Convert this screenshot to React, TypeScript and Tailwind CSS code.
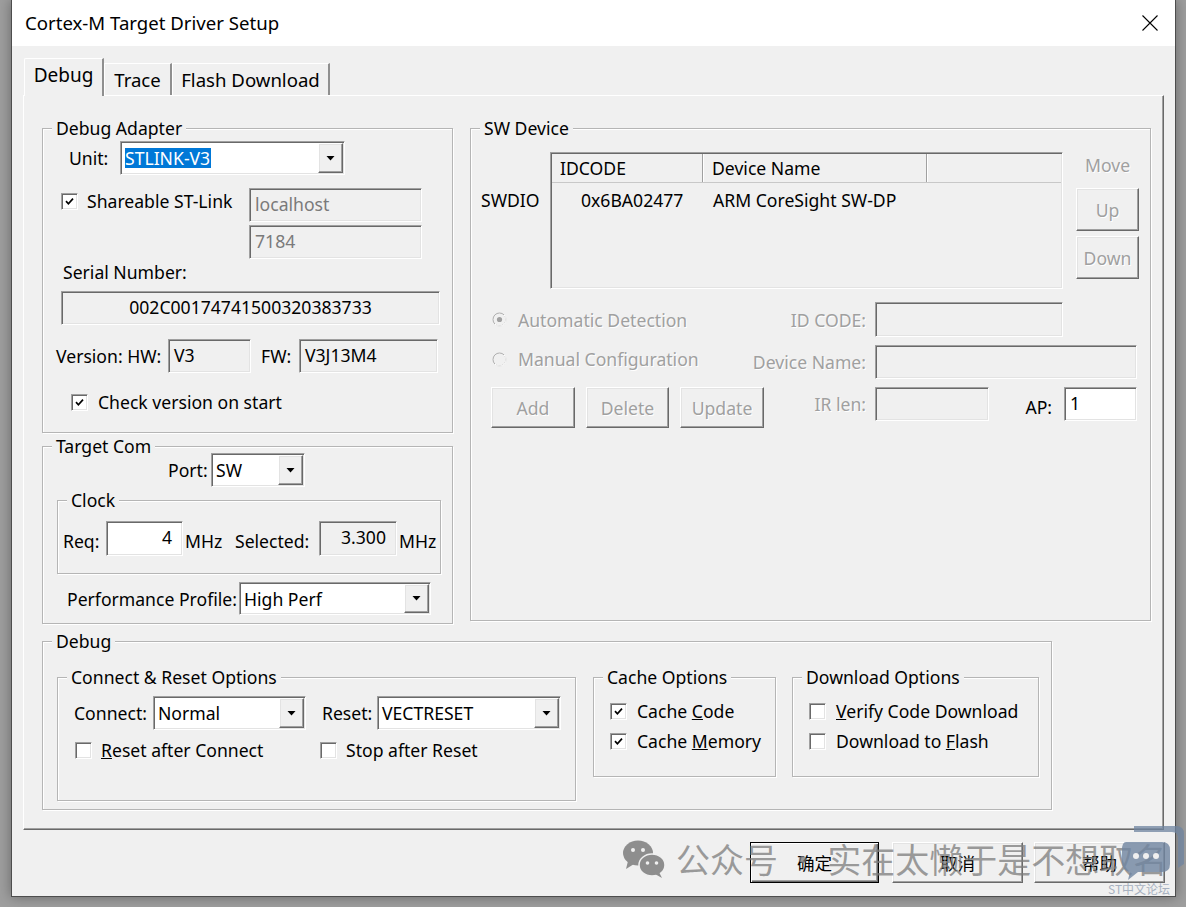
import React from "react";

const sunken =
  "border border-t-[#a0a0a0] border-l-[#a0a0a0] border-b-white border-r-white shadow-[inset_1px_1px_0_#696969,inset_-1px_-1px_0_#e3e3e3]";
const raised =
  "border border-t-white border-l-white border-b-[#696969] border-r-[#696969] shadow-[inset_-1px_-1px_0_#a0a0a0,inset_1px_1px_0_#e3e3e3]";
const gray = "text-[#a0a0a0] [text-shadow:1px_1px_0_#ffffff]";

function Group({
  title,
  className = "",
  children,
}: {
  title: string;
  className?: string;
  children?: React.ReactNode;
}) {
  return (
    <div
      className={`relative border border-[#b5b5b5] shadow-[1px_1px_0_#fff,inset_1px_1px_0_#fff] ${className}`}
    >
      <span className="absolute -top-[11px] left-[9px] px-[4px] bg-[#f0f0f0] leading-[20px] whitespace-nowrap">
        {title}
      </span>
      {children}
    </div>
  );
}

function Check({ checked = false }: { checked?: boolean }) {
  return (
    <span
      className={`${sunken} w-[17px] h-[17px] bg-white flex items-center justify-center shrink-0`}
    >
      {checked && (
        <svg width="9" height="9" viewBox="0 0 9 9">
          <path d="M1 4.2 L3.4 6.8 L8 1.6" stroke="#000" strokeWidth="1.7" fill="none" />
        </svg>
      )}
    </span>
  );
}

function Radio({ on = false }: { on?: boolean }) {
  return (
    <svg width="15" height="15" viewBox="0 0 15 15" className="shrink-0">
      <circle cx="7.5" cy="7.5" r="6.5" fill="#f0f0f0" stroke="#b0b0b0" />
      <path d="M3 12.2 A6.5 6.5 0 0 0 12.2 3" stroke="#ffffff" fill="none" />
      {on && <circle cx="7.5" cy="7.5" r="2.6" fill="#a0a0a0" />}
    </svg>
  );
}

function Combo({
  value,
  className = "",
  selected = false,
}: {
  value: string;
  className?: string;
  selected?: boolean;
}) {
  return (
    <div className={`${sunken} bg-white flex p-[1px] shrink-0 ${className}`}>
      <div className="flex-1 flex items-center pl-[3px] overflow-hidden whitespace-nowrap">
        <span className={selected ? "bg-[#0078d7] text-white pr-[1px]" : ""}>{value}</span>
      </div>
      <div className={`${raised} w-[25px] bg-[#f0f0f0] flex items-center justify-center`}>
        <svg width="9" height="5" viewBox="0 0 9 5">
          <path d="M0.5 0 H8.5 L4.5 4.5 Z" fill="#000" />
        </svg>
      </div>
    </div>
  );
}

function Field({
  value = "",
  className = "",
  white = false,
  dim = false,
  align = "left",
}: {
  value?: string;
  className?: string;
  white?: boolean;
  dim?: boolean;
  align?: "left" | "right" | "center";
}) {
  const a =
    align === "right" ? "justify-end pr-[10px]" : align === "center" ? "justify-center" : "justify-start pl-[5px]";
  return (
    <div
      className={`${sunken} ${white ? "bg-white" : "bg-[#f0f0f0]"} ${
        dim ? "text-[#7a7a7a]" : "text-black"
      } flex items-center pb-[3px] whitespace-nowrap shrink-0 ${a} ${className}`}
    >
      {value}
    </div>
  );
}

function Btn({
  label,
  className = "",
  disabled = false,
  main = false,
}: {
  label: string;
  className?: string;
  disabled?: boolean;
  main?: boolean;
}) {
  return (
    <div
      className={`${
        main
          ? "border border-black shadow-[inset_1px_1px_0_#fff,inset_-1px_-1px_0_#696969,inset_-2px_-2px_0_#a0a0a0]"
          : raised
      } bg-[#f0f0f0] flex items-center justify-center shrink-0 ${disabled ? gray : "text-black"} ${className}`}
    >
      {label}
    </div>
  );
}

function ListView() {
  return (
    <div className={`${sunken} w-[513px] h-[137px] bg-[#f0f0f0] flex flex-col p-[1px] shrink-0`}>
      <div className="flex h-[29px] border-b border-[#c8c8c8]">
        <div className="w-[151px] flex items-center pl-[8px] border-r border-[#a0a0a0] shadow-[1px_0_0_#fff]">
          IDCODE
        </div>
        <div className="w-[224px] flex items-center pl-[9px] border-r border-[#a0a0a0] shadow-[1px_0_0_#fff]">
          Device Name
        </div>
        <div className="flex-1" />
      </div>
      <div className="flex mt-[7px] leading-[20px]">
        <span className="w-[152px] pl-[29px]">0x6BA02477</span>
        <span className="pl-[9px]">ARM CoreSight SW-DP</span>
      </div>
    </div>
  );
}

function WeChat() {
  return (
    <svg width="44" height="40" viewBox="0 0 44 40">
      <ellipse cx="16" cy="14" rx="15" ry="12.5" fill="#8e8e8e" />
      <path d="M6 22 L4 30 L12 25 Z" fill="#8e8e8e" />
      <circle cx="11" cy="11" r="2" fill="#f0f0f0" />
      <circle cx="21" cy="11" r="2" fill="#f0f0f0" />
      <ellipse cx="30" cy="26" rx="13" ry="11" fill="#8e8e8e" stroke="#f0f0f0" strokeWidth="1.5" />
      <path d="M37 33 L40 39 L33 35 Z" fill="#8e8e8e" />
      <circle cx="25.5" cy="24" r="1.8" fill="#f0f0f0" />
      <circle cx="34.5" cy="24" r="1.8" fill="#f0f0f0" />
    </svg>
  );
}

export default function App() {
  return (
    <div className="relative w-[1186px] h-[907px] overflow-hidden bg-[#9e9e9e] font-['Noto_Sans','Noto_Sans_CJK_SC',sans-serif] text-[17.6px] leading-[20px] text-black">
      <div className="ml-[11px] w-[1165px] h-[897px] bg-[#f0f0f0] border-l border-r border-b border-[#4d4d4d] flex flex-col shadow-[0_0_12px_rgba(0,0,0,0.35)]">
        {/* title bar */}
        <div className="h-[46px] bg-white flex items-center justify-between pl-[13px] pr-[17px] shrink-0">
          <span className="text-[18.6px]">Cortex-M Target Driver Setup</span>
          <svg width="16" height="16" viewBox="0 0 16 16">
            <path d="M0.5 0.5 L15.5 15.5 M15.5 0.5 L0.5 15.5" stroke="#000" strokeWidth="1.1" />
          </svg>
        </div>

        {/* tabs */}
        <div className="flex items-end h-[37px] mt-[12px] pl-[12px] shrink-0">
          <div className="relative z-10 -mb-px h-[38px] w-[80px] bg-[#f0f0f0] border-t border-l border-white border-r-2 border-r-[#8f8f8f] rounded-tl-[2px] flex items-start justify-center pt-[6px] text-[19px]">
            Debug
          </div>
          <div className="h-[32px] w-[68px] border-t border-l border-white border-r-2 border-r-[#8f8f8f] flex items-center justify-center text-[18.6px]">
            Trace
          </div>
          <div className="h-[32px] w-[158px] border-t border-l border-white border-r-2 border-r-[#8f8f8f] flex items-center justify-center text-[18.6px]">
            Flash Download
          </div>
        </div>

        {/* tab panel */}
        <div className="ml-[11px] w-[1141px] h-[735px] border-t border-l border-white border-r border-b border-r-[#696969] border-b-[#696969] shadow-[inset_-1px_-1px_0_#a0a0a0] pt-[32px] pl-[18px] shrink-0">
          <div className="flex">
            <div className="flex flex-col w-[411px]">
              <Group title="Debug Adapter" className="h-[305px] flex flex-col">
                <div className="flex items-center mt-[12px] h-[34px]">
                  <span className="ml-[26px] w-[51px]">Unit:</span>
                  <Combo value="STLINK-V3" selected className="w-[225px] h-[34px]" />
                </div>
                <div className="flex mt-[13px]">
                  <div className="w-[206px] flex items-center h-[26px] pl-[18px] gap-[9px]">
                    <Check checked />
                    <span className="whitespace-nowrap">Shareable ST-Link</span>
                  </div>
                  <div className="flex flex-col gap-[3px]">
                    <Field value="localhost" dim className="w-[173px] h-[34px]" />
                    <Field value="7184" dim className="w-[173px] h-[34px]" />
                  </div>
                </div>
                <span className="mt-[3px] ml-[20px]">Serial Number:</span>
                <Field
                  value="002C00174741500320383733"
                  align="center"
                  className="mt-[9px] ml-[18px] w-[379px] h-[34px]"
                />
                <div className="flex items-center mt-[14px] h-[34px]">
                  <span className="ml-[13px] w-[112px] whitespace-nowrap">Version: HW:</span>
                  <Field value="V3" className="w-[83px] h-[34px]" />
                  <span className="ml-[10px] w-[38px]">FW:</span>
                  <Field value="V3J13M4" className="w-[139px] h-[34px]" />
                </div>
                <div className="flex items-center mt-[19px] h-[20px] ml-[28px] gap-[10px]">
                  <Check checked />
                  <span>Check version on start</span>
                </div>
              </Group>

              <Group title="Target Com" className="mt-[13px] h-[178px] flex flex-col">
                <div className="flex items-center mt-[6px] h-[34px]">
                  <span className="ml-[125px] w-[43px]">Port:</span>
                  <Combo value="SW" className="w-[94px] h-[34px]" />
                </div>
                <Group title="Clock" className="ml-[14px] mt-[13px] w-[384px] h-[74px]">
                  <div className="flex items-center mt-[20px] h-[35px] whitespace-nowrap">
                    <span className="ml-[5px] w-[43px] pt-[5px]">Req:</span>
                    <Field value="4" white align="right" className="w-[77px] h-[35px]" />
                    <span className="ml-[2px] w-[50px] pt-[5px]">MHz</span>
                    <span className="w-[84px] pt-[5px]">Selected:</span>
                    <Field value="3.300" align="right" className="w-[78px] h-[35px]" />
                    <span className="ml-[2px] pt-[5px]">MHz</span>
                  </div>
                </Group>
                <div className="flex items-center mt-[8px] h-[33px]">
                  <span className="ml-[24px] w-[172px] whitespace-nowrap">Performance Profile:</span>
                  <Combo value="High Perf" className="w-[192px] h-[33px]" />
                </div>
              </Group>
            </div>

            <Group title="SW Device" className="ml-[17px] w-[681px] h-[493px] flex flex-col">
              <div className="flex mt-[23px]">
                <span className="w-[79px] pl-[10px] mt-[38px] h-[20px] shrink-0">SWDIO</span>
                <ListView />
                <div className="ml-[13px] flex flex-col w-[63px]">
                  <span className={`${gray} mt-[3px] text-center`}>Move</span>
                  <Btn label="Up" disabled className="mt-[13px] w-[63px] h-[43px]" />
                  <Btn label="Down" disabled className="mt-[5px] w-[63px] h-[43px]" />
                </div>
              </div>
              <div className="flex items-center mt-[13px] h-[35px]">
                <div className="w-[254px] pl-[21px] flex items-center gap-[11px] whitespace-nowrap">
                  <Radio on />
                  <span className={gray}>Automatic Detection</span>
                </div>
                <span className={`${gray} w-[150px] text-right pr-[9px]`}>ID CODE:</span>
                <Field className="w-[188px] h-[35px]" />
              </div>
              <div className="flex items-center mt-[8px] h-[34px]">
                <div className="w-[254px] pl-[21px] flex items-center gap-[11px] pb-[6px] whitespace-nowrap">
                  <Radio />
                  <span className={gray}>Manual Configuration</span>
                </div>
                <span className={`${gray} w-[150px] text-right pr-[9px]`}>Device Name:</span>
                <Field className="w-[262px] h-[34px]" />
              </div>
              <div className="flex items-start mt-[8px]">
                <div className="pl-[20px] flex gap-[11px]">
                  <Btn label="Add" disabled className="w-[84px] h-[41px]" />
                  <Btn label="Delete" disabled className="w-[83px] h-[41px]" />
                  <Btn label="Update" disabled className="w-[84px] h-[41px]" />
                </div>
                <span className={`${gray} w-[111px] h-[34px] flex items-center justify-end pr-[9px]`}>
                  IR len:
                </span>
                <Field className="w-[114px] h-[34px]" />
                <span className="w-[75px] h-[34px] flex items-center justify-end pr-[12px] pt-[6px]">AP:</span>
                <Field value="1" white className="w-[73px] h-[34px]" />
              </div>
            </Group>
          </div>

          <Group title="Debug" className="mt-[17px] w-[1010px] h-[169px]">
            <div className="flex items-start mt-[35px] ml-[14px]">
              <Group title="Connect & Reset Options" className="w-[519px] h-[124px] flex flex-col">
                <div className="flex items-center mt-[18px] h-[34px]">
                  <span className="ml-[16px] w-[79px]">Connect:</span>
                  <Combo value="Normal" className="w-[153px] h-[34px]" />
                  <span className="ml-[16px] w-[55px]">Reset:</span>
                  <Combo value="VECTRESET" className="w-[184px] h-[34px]" />
                </div>
                <div className="flex items-center mt-[10px] h-[20px] whitespace-nowrap">
                  <div className="ml-[17px] w-[245px] flex items-center gap-[9px]">
                    <Check />
                    <span>
                      <u>R</u>eset after Connect
                    </span>
                  </div>
                  <div className="flex items-center gap-[9px]">
                    <Check />
                    <span>Stop after Reset</span>
                  </div>
                </div>
              </Group>

              <Group title="Cache Options" className="ml-[17px] w-[183px] h-[100px] flex flex-col">
                <div className="flex items-center mt-[23px] h-[20px] ml-[16px] gap-[10px]">
                  <Check checked />
                  <span>
                    Cache <u>C</u>ode
                  </span>
                </div>
                <div className="flex items-center mt-[10px] h-[20px] ml-[16px] gap-[10px]">
                  <Check checked />
                  <span>
                    Cache <u>M</u>emory
                  </span>
                </div>
              </Group>

              <Group title="Download Options" className="ml-[16px] w-[247px] h-[100px] flex flex-col">
                <div className="flex items-center mt-[23px] h-[20px] ml-[16px] gap-[10px] whitespace-nowrap">
                  <Check />
                  <span>
                    <u>V</u>erify Code Download
                  </span>
                </div>
                <div className="flex items-center mt-[10px] h-[20px] ml-[16px] gap-[10px]">
                  <Check />
                  <span>
                    Download to <u>F</u>lash
                  </span>
                </div>
              </Group>
            </div>
          </Group>
        </div>

        {/* dialog buttons */}
        <div className="flex justify-end mt-[12px] pr-[10px]">
          <Btn label="确定" main className="w-[129px] h-[41px]" />
          <Btn label="取消" className="ml-[13px] w-[131px] h-[41px]" />
          <Btn label="帮助" className="ml-[11px] w-[131px] h-[41px]" />
        </div>
      </div>

      {/* watermark overlay */}
      <div className="absolute left-[622px] top-[839px] flex items-center gap-[10px] pointer-events-none">
        <WeChat />
        <span className="text-[34px] leading-[40px] text-[#7d7d7d]/75 font-['Noto_Sans_CJK_SC',sans-serif] whitespace-nowrap">
          公众号 · 实在太懒于是不想取名
        </span>
      </div>
      <svg
        className="absolute left-[1118px] top-[822px] pointer-events-none"
        width="68"
        height="64"
        viewBox="0 0 68 64"
      >
        <path
          d="M16 4 H58 Q66 4 66 12 V42 L60 46 V16 Q60 10 54 10 H16 Z"
          fill="#6f84a0"
          opacity="0.75"
        />
        <path d="M8 20 H44 Q52 20 52 28 V42 Q52 50 44 50 H20 L10 58 L12 50 Q4 48 4 40 V28 Q4 20 8 20 Z" fill="#6f84a0" opacity="0.8" />
        <circle cx="18" cy="34" r="3" fill="#f0f0f0" />
        <circle cx="28" cy="34" r="3" fill="#f0f0f0" />
        <circle cx="38" cy="34" r="3" fill="#f0f0f0" />
      </svg>
      <span className="absolute left-[1108px] top-[882px] text-[12px] leading-[14px] text-[#a7b1c0] font-['Noto_Sans_CJK_SC',sans-serif] whitespace-nowrap">
        ST中文论坛
      </span>
    </div>
  );
}
